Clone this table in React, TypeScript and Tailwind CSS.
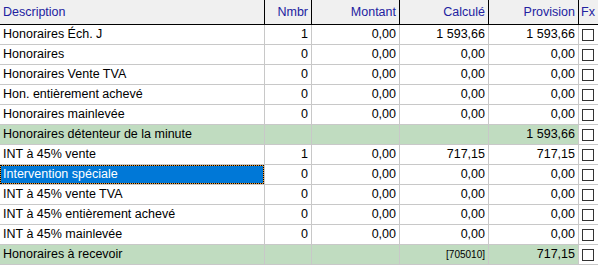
import React from 'react'

type Row = {
  label: string
  nmbr?: string
  montant?: string
  calcule?: string
  provision?: string
  total?: boolean
  selected?: boolean
  code?: boolean
}

const rows: Row[] = [
  { label: 'Honoraires Éch. J', nmbr: '1', montant: '0,00', calcule: '1 593,66', provision: '1 593,66' },
  { label: 'Honoraires', nmbr: '0', montant: '0,00', calcule: '0,00', provision: '0,00' },
  { label: 'Honoraires Vente TVA', nmbr: '0', montant: '0,00', calcule: '0,00', provision: '0,00' },
  { label: 'Hon. entièrement achevé', nmbr: '0', montant: '0,00', calcule: '0,00', provision: '0,00' },
  { label: 'Honoraires mainlevée', nmbr: '0', montant: '0,00', calcule: '0,00', provision: '0,00' },
  { label: 'Honoraires détenteur de la minute', provision: '1 593,66', total: true },
  { label: 'INT à 45% vente', nmbr: '1', montant: '0,00', calcule: '717,15', provision: '717,15' },
  { label: 'Intervention spéciale', nmbr: '0', montant: '0,00', calcule: '0,00', provision: '0,00', selected: true },
  { label: 'INT à 45% vente TVA', nmbr: '0', montant: '0,00', calcule: '0,00', provision: '0,00' },
  { label: 'INT à 45% entièrement achevé', nmbr: '0', montant: '0,00', calcule: '0,00', provision: '0,00' },
  { label: 'INT à 45% mainlevée', nmbr: '0', montant: '0,00', calcule: '0,00', provision: '0,00' },
  { label: 'Honoraires à recevoir', calcule: '[705010]', provision: '717,15', total: true, code: true },
]

function Checkbox() {
  return <div className="w-[12px] h-[12px] border border-[#333333] bg-white" />
}

export default function App() {
  return (
    <div
      className="w-[598px] h-[266px] bg-white text-[12.5px] leading-none text-black overflow-hidden"
      style={{ fontFamily: '"Liberation Sans", Arial, sans-serif' }}
    >
      {/* Header */}
      <div className="flex h-[25px] bg-[#f0f0f0] border-b border-black text-[#2222a0]">
        <div className="w-[265px] border-r border-black flex items-center pl-[3px] pt-[1px]">Description</div>
        <div className="w-[47px] border-r border-black flex items-center justify-end pr-[3px] pt-[1px]">Nmbr</div>
        <div className="w-[88px] border-r border-black flex items-center justify-end pr-[3px] pt-[1px]">Montant</div>
        <div className="w-[89px] border-r border-black flex items-center justify-end pr-[3px] pt-[1px]">Calculé</div>
        <div className="w-[90px] border-r border-black flex items-center justify-end pr-[3px] pt-[1px]">Provision</div>
        <div className="w-[19px] flex items-center pl-[2px] pt-[1px]">Fx</div>
      </div>

      {/* Rows */}
      {rows.map((r, i) => {
        const bg = r.total ? 'bg-[#c0dcc0]' : 'bg-white'
        return (
          <div key={i} className="flex h-[20px]">
            {r.selected ? (
              <div className="w-[265px] border-r border-b border-[#c8c8c8] flex">
                <div className="flex-1 flex items-center pl-[2px] bg-[#0078d7] text-white border border-[#f39a2c] outline outline-1 outline-dotted outline-black -outline-offset-1">
                  {r.label}
                </div>
              </div>
            ) : (
              <div className={`w-[265px] border-r border-b border-[#c8c8c8] flex items-center pl-[3px] ${bg}`}>
                {r.label}
              </div>
            )}
            <div className={`w-[47px] border-r border-b border-[#c8c8c8] flex items-center justify-end pr-[3px] ${bg}`}>
              {r.nmbr}
            </div>
            <div className={`w-[88px] border-r border-b border-[#c8c8c8] flex items-center justify-end pr-[3px] ${bg}`}>
              {r.montant}
            </div>
            <div className={`w-[89px] border-r border-b border-[#c8c8c8] flex items-center justify-end pr-[3px] ${bg}`}>
              <span className={r.code ? 'text-[10px]' : ''}>{r.calcule}</span>
            </div>
            <div className={`w-[90px] border-r border-b border-[#c8c8c8] flex items-center justify-end pr-[3px] ${bg}`}>
              {r.provision}
            </div>
            <div className="w-[19px] border-b border-[#c8c8c8] flex items-center pl-[3px] bg-white">
              <Checkbox />
            </div>
          </div>
        )
      })}
    </div>
  )
}
